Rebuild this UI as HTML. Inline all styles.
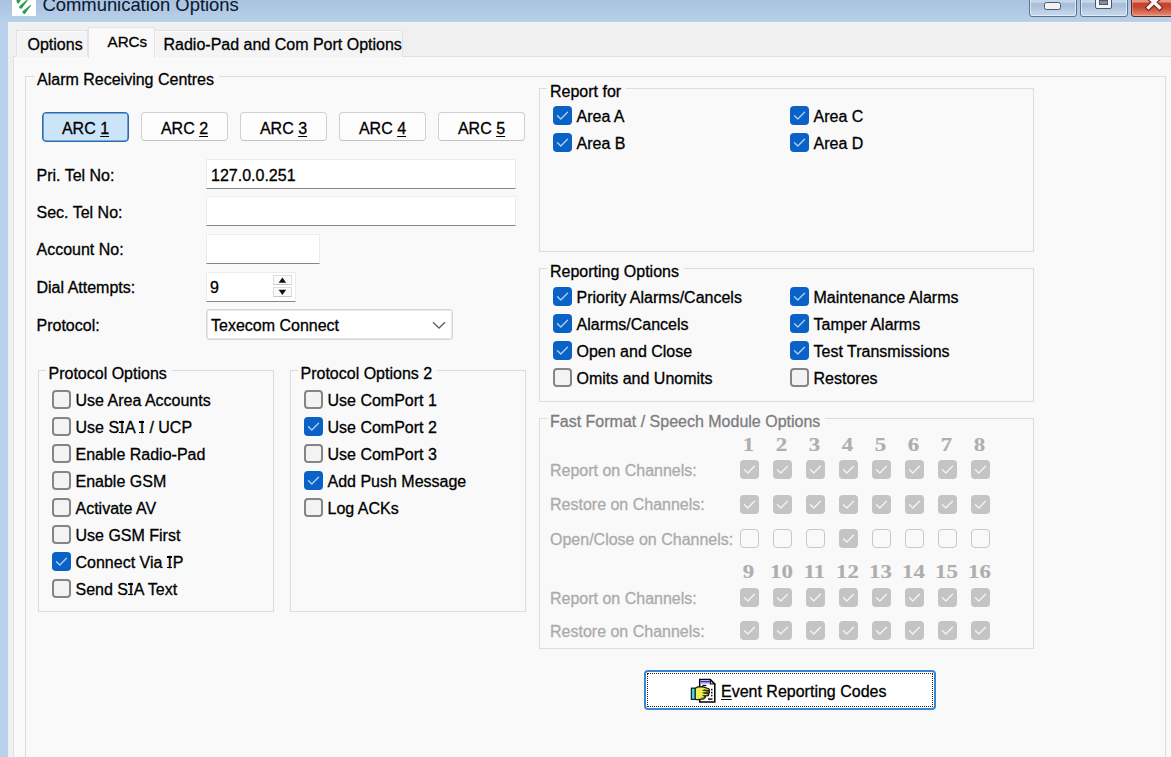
<!DOCTYPE html>
<html><head><meta charset="utf-8"><style>
html,body{margin:0;padding:0;}
body{width:1171px;height:757px;overflow:hidden;position:relative;background:#b9d1ea;font-family:"Liberation Sans", sans-serif;font-size:16px;}
.t{position:absolute;white-space:pre;line-height:18px;font-size:16px;-webkit-text-stroke:0.3px currentColor;}
.cb{position:absolute;box-sizing:border-box;width:19px;height:19px;border:2px solid #858585;border-radius:4px;background:#f3f3f3;}
.grp{position:absolute;border:1px solid #dcdcdc;box-sizing:border-box;}
.I{position:relative;margin:0 0.7px}
.I::before,.I::after{content:"";position:absolute;left:-0.6px;width:5.2px;height:1.5px;background:currentColor}
.I::before{top:2.6px}.I::after{top:12.9px}
.btn{position:absolute;box-sizing:border-box;border:1px solid #d0d0d0;border-radius:4px;background:#fdfdfd;}
.tb{position:absolute;box-sizing:border-box;background:#fff;border:1px solid #ececec;border-bottom:1px solid #858585;border-radius:1px 1px 0 0;}
</style></head><body>
<div style="position:absolute;left:0;top:0;width:1171px;height:22px;background:linear-gradient(#a9c2df,#b9d0ea)"></div>
<div style="position:absolute;left:12px;top:0;width:24px;height:16px;background:#fff"></div>
<svg style="position:absolute;left:12px;top:0" width="24" height="16" viewBox="0 0 24 16">
<path d="M4.3,-0.5 L9.2,-0.5 L6.8,3.4 Q5.6,4.0 5.0,2.8 Z" fill="#2e9b50"/>
<path d="M7.0,6.4 L15.5,-0.8 L16.1,-0.2 L9.6,8.8 Q7.2,9.2 7.0,6.4 Z" fill="#2e9b50"/>
<path d="M10.3,11.6 L18.6,4.7 L19.2,5.3 L12.9,14.0 Q10.5,14.5 10.3,11.6 Z" fill="#2e9b50"/>
</svg>
<div class="t" style="left:42.5px;top:-5px;font-size:18.4px;line-height:20px;color:#0b1a30;-webkit-text-stroke:0.1px currentColor">Communication Options</div>
<div style="position:absolute;left:1029px;top:-4px;width:48px;height:21px;box-sizing:border-box;border:1px solid #61748f;border-radius:0 0 3px 3px;background:linear-gradient(#c9daee 0%,#c3d5ea 28%,#a8bed9 33%,#abc1da 50%,#bcd0e7 75%,#c6d9ed 100%);box-shadow:inset 0 0 0 1px rgba(235,242,250,0.75)"></div>
<div style="position:absolute;left:1044px;top:2px;width:17px;height:8px;box-sizing:border-box;border:1.5px solid #4a5870;border-radius:2.5px;background:#f2f2f2"></div>
<div style="position:absolute;left:1080px;top:-4px;width:48px;height:21px;box-sizing:border-box;border:1px solid #61748f;border-radius:0 0 3px 3px;background:linear-gradient(#c9daee 0%,#c3d5ea 28%,#a8bed9 33%,#abc1da 50%,#bcd0e7 75%,#c6d9ed 100%);box-shadow:inset 0 0 0 1px rgba(235,242,250,0.75)"></div>
<div style="position:absolute;left:1095px;top:-4px;width:17px;height:13px;box-sizing:border-box;border:1px solid #4a5870;border-radius:2px;background:#f4f4f4"></div>
<div style="position:absolute;left:1099px;top:0px;width:9px;height:5px;box-sizing:border-box;border:1px solid #4a5870;background:#7f90a8"></div>
<div style="position:absolute;left:1131px;top:-4px;width:45px;height:21px;box-sizing:border-box;border:1px solid #5a2a24;border-radius:0 0 3px 3px;background:linear-gradient(#eaa292 0%,#e4907f 26%,#c8422a 33%,#c94a31 55%,#dc765e 85%,#e8907a 100%);box-shadow:inset 0 0 0 1px rgba(255,210,200,0.35)"></div>
<svg style="position:absolute;left:1139px;top:-8px" width="30" height="22"><path d="M9.5,5 L20.5,15.5 M20.5,5 L9.5,15.5" stroke="#7a2a1e" stroke-width="5.5" stroke-linecap="square"/><path d="M9.5,5 L20.5,15.5 M20.5,5 L9.5,15.5" stroke="#fbfbfb" stroke-width="3.2" stroke-linecap="square"/></svg>
<div style="position:absolute;left:0;top:22px;width:8px;height:735px;background:#b9d1ea"></div>
<div style="position:absolute;left:8px;top:22px;width:1163px;height:735px;background:#f0f0f0;border-left:1px solid #e8f0fa;border-top:1px solid #f4f6f9;box-sizing:border-box"></div>
<div style="position:absolute;left:13px;top:56px;width:1160px;height:710px;background:#f9f9f9;border:1px solid #e0e0e0;box-sizing:border-box"></div>
<div style="position:absolute;left:16px;top:30px;width:72px;height:27px;background:#f4f4f5;box-shadow:inset 1px 1px 0 #fafafa;border:1px solid #e3e3e3;border-bottom:none;box-sizing:border-box"></div>
<div style="position:absolute;left:154px;top:30px;width:249px;height:27px;background:#f4f4f5;box-shadow:inset 1px 1px 0 #fafafa;border:1px solid #e3e3e3;border-bottom:none;box-sizing:border-box"></div>
<div style="position:absolute;left:88px;top:27px;width:67px;height:31px;background:#f9f9f9;border:1px solid #e3e3e3;border-bottom:none;box-sizing:border-box"></div>
<div class="t" style="left:27.5px;top:36.00px;color:#000;font-size:16px;font-weight:normal;font-family:"Liberation Sans", sans-serif;">Options</div>
<div class="t" style="left:107.5px;top:33.20px;color:#000;font-size:15.2px;font-weight:normal;font-family:"Liberation Sans", sans-serif;">ARCs</div>
<div class="t" style="left:163.5px;top:36.00px;color:#000;font-size:16px;font-weight:normal;font-family:"Liberation Sans", sans-serif;">Radio-Pad and Com Port Options</div>
<div class="grp" style="left:25px;top:76px;width:1141px;height:724px"></div>
<div class="t" style="left:34px;top:70.70px;padding:0 5px 0 3px;background:#f9f9f9;color:#000">Alarm Receiving Centres</div>
<div class="btn" style="left:42px;top:112px;width:87px;height:29.5px;background:#cce4f7;border:1px solid #2a6bb0;box-shadow:inset 0 0 0 0.6px #2a6bb0"></div>
<div class="t" style="left:42px;top:113.5px;width:87px;text-align:center;line-height:29px">ARC <u style="text-underline-offset:2px">1</u></div>
<div class="btn" style="left:141px;top:112px;width:87px;height:29px;border-bottom-color:#c2c2c2"></div>
<div class="t" style="left:141px;top:113.5px;width:87px;text-align:center;line-height:29px">ARC <u style="text-underline-offset:2px">2</u></div>
<div class="btn" style="left:240px;top:112px;width:87px;height:29px;border-bottom-color:#c2c2c2"></div>
<div class="t" style="left:240px;top:113.5px;width:87px;text-align:center;line-height:29px">ARC <u style="text-underline-offset:2px">3</u></div>
<div class="btn" style="left:339px;top:112px;width:87px;height:29px;border-bottom-color:#c2c2c2"></div>
<div class="t" style="left:339px;top:113.5px;width:87px;text-align:center;line-height:29px">ARC <u style="text-underline-offset:2px">4</u></div>
<div class="btn" style="left:438px;top:112px;width:87px;height:29px;border-bottom-color:#c2c2c2"></div>
<div class="t" style="left:438px;top:113.5px;width:87px;text-align:center;line-height:29px">ARC <u style="text-underline-offset:2px">5</u></div>
<div class="t" style="left:36.5px;top:166.70px;color:#000;font-size:16px;font-weight:normal;font-family:"Liberation Sans", sans-serif;">Pri. Tel No:</div>
<div class="t" style="left:36.5px;top:204.30px;color:#000;font-size:16px;font-weight:normal;font-family:"Liberation Sans", sans-serif;">Sec. Tel No:</div>
<div class="t" style="left:36.5px;top:241.40px;color:#000;font-size:16px;font-weight:normal;font-family:"Liberation Sans", sans-serif;">Account No:</div>
<div class="t" style="left:36.5px;top:279.00px;color:#000;font-size:16px;font-weight:normal;font-family:"Liberation Sans", sans-serif;">Dial Attempts:</div>
<div class="t" style="left:36.5px;top:316.60px;color:#000;font-size:16px;font-weight:normal;font-family:"Liberation Sans", sans-serif;">Protocol:</div>
<div class="tb" style="left:206px;top:159px;width:310px;height:30px"></div>
<div class="t" style="left:211px;top:166.70px;color:#000;font-size:16px;font-weight:normal;font-family:"Liberation Sans", sans-serif;letter-spacing:0.4px">127.0.0.251</div>
<div class="tb" style="left:206px;top:196px;width:310px;height:30px"></div>
<div class="tb" style="left:206px;top:234px;width:114px;height:30px"></div>
<div class="tb" style="left:206px;top:272px;width:90px;height:30px"></div>
<div class="t" style="left:210px;top:279.00px;color:#000;font-size:16px;font-weight:normal;font-family:"Liberation Sans", sans-serif;">9</div>
<div style="position:absolute;left:273px;top:275px;width:19px;height:10px;box-sizing:border-box;border:1px solid #dedede;border-bottom-color:#c9c9c9;background:#fbfbfb"></div>
<div style="position:absolute;left:273px;top:287px;width:19px;height:10px;box-sizing:border-box;border:1px solid #dedede;border-bottom-color:#c9c9c9;background:#fbfbfb"></div>
<svg style="position:absolute;left:272px;top:274px" width="20" height="24"><path d="M6.6,8.8 L14.2,8.8 L10.4,3.6 Z" fill="#111"/><path d="M6.6,15.8 L14.2,15.8 L10.4,21 Z" fill="#111"/></svg>
<div style="position:absolute;left:206px;top:308.5px;width:247px;height:31px;box-sizing:border-box;border:1px solid #d6d6d6;box-shadow:inset 0 0 0 0.7px #e0e0e0;border-radius:3px;background:#fff"></div>
<div class="t" style="left:211px;top:316.60px;color:#000;font-size:16px;font-weight:normal;font-family:"Liberation Sans", sans-serif;">Texecom Connect</div>
<svg style="position:absolute;left:431px;top:318.5px" width="16" height="12"><polyline points="2,3.2 8,9 14,3.2" fill="none" stroke="#606060" stroke-width="1.3"/></svg>
<div class="grp" style="left:38px;top:370px;width:236px;height:242px"></div>
<div class="t" style="left:45.5px;top:365.10px;padding:0 5px 0 3px;background:#f9f9f9;color:#000">Protocol Options</div>
<div class="cb" style="left:52px;top:389.5px;"></div>
<div class="t" style="left:75.5px;top:391.70px;color:#000;font-size:16px;font-weight:normal;font-family:"Liberation Sans", sans-serif;">Use Area Accounts</div>
<div class="cb" style="left:52px;top:416.5px;"></div>
<div class="t" style="left:75.5px;top:418.70px;color:#000;font-size:16px;font-weight:normal;font-family:"Liberation Sans", sans-serif;">Use S<span class="I">I</span>A <span class="I">I</span> / UCP</div>
<div class="cb" style="left:52px;top:443.5px;"></div>
<div class="t" style="left:75.5px;top:445.70px;color:#000;font-size:16px;font-weight:normal;font-family:"Liberation Sans", sans-serif;">Enable Radio-Pad</div>
<div class="cb" style="left:52px;top:470.5px;"></div>
<div class="t" style="left:75.5px;top:472.70px;color:#000;font-size:16px;font-weight:normal;font-family:"Liberation Sans", sans-serif;">Enable GSM</div>
<div class="cb" style="left:52px;top:497.5px;"></div>
<div class="t" style="left:75.5px;top:499.70px;color:#000;font-size:16px;font-weight:normal;font-family:"Liberation Sans", sans-serif;">Activate AV</div>
<div class="cb" style="left:52px;top:524.5px;"></div>
<div class="t" style="left:75.5px;top:526.70px;color:#000;font-size:16px;font-weight:normal;font-family:"Liberation Sans", sans-serif;">Use GSM First</div>
<div class="cb" style="left:52px;top:551.5px;background:#0b62c6;border:none"><svg width="19" height="19" viewBox="0 0 19 19" style="position:absolute;left:0;top:0"><polyline points="4.5,9.8 7.8,13 14.5,6.2" fill="none" stroke="#a9d0f7" stroke-width="1.4" stroke-linecap="round" stroke-linejoin="round"/></svg></div>
<div class="t" style="left:75.5px;top:553.70px;color:#000;font-size:16px;font-weight:normal;font-family:"Liberation Sans", sans-serif;">Connect Via <span class="I">I</span>P</div>
<div class="cb" style="left:52px;top:578.5px;"></div>
<div class="t" style="left:75.5px;top:580.70px;color:#000;font-size:16px;font-weight:normal;font-family:"Liberation Sans", sans-serif;">Send S<span class="I">I</span>A Text</div>
<div class="grp" style="left:290px;top:370px;width:236px;height:242px"></div>
<div class="t" style="left:297.5px;top:365.10px;padding:0 5px 0 3px;background:#f9f9f9;color:#000">Protocol Options 2</div>
<div class="cb" style="left:304px;top:389.5px;"></div>
<div class="t" style="left:327.5px;top:391.70px;color:#000;font-size:16px;font-weight:normal;font-family:"Liberation Sans", sans-serif;">Use ComPort 1</div>
<div class="cb" style="left:304px;top:416.5px;background:#0b62c6;border:none"><svg width="19" height="19" viewBox="0 0 19 19" style="position:absolute;left:0;top:0"><polyline points="4.5,9.8 7.8,13 14.5,6.2" fill="none" stroke="#a9d0f7" stroke-width="1.4" stroke-linecap="round" stroke-linejoin="round"/></svg></div>
<div class="t" style="left:327.5px;top:418.70px;color:#000;font-size:16px;font-weight:normal;font-family:"Liberation Sans", sans-serif;">Use ComPort 2</div>
<div class="cb" style="left:304px;top:443.5px;"></div>
<div class="t" style="left:327.5px;top:445.70px;color:#000;font-size:16px;font-weight:normal;font-family:"Liberation Sans", sans-serif;">Use ComPort 3</div>
<div class="cb" style="left:304px;top:470.5px;background:#0b62c6;border:none"><svg width="19" height="19" viewBox="0 0 19 19" style="position:absolute;left:0;top:0"><polyline points="4.5,9.8 7.8,13 14.5,6.2" fill="none" stroke="#a9d0f7" stroke-width="1.4" stroke-linecap="round" stroke-linejoin="round"/></svg></div>
<div class="t" style="left:327.5px;top:472.70px;color:#000;font-size:16px;font-weight:normal;font-family:"Liberation Sans", sans-serif;">Add Push Message</div>
<div class="cb" style="left:304px;top:497.5px;"></div>
<div class="t" style="left:327.5px;top:499.70px;color:#000;font-size:16px;font-weight:normal;font-family:"Liberation Sans", sans-serif;">Log ACKs</div>
<div class="grp" style="left:539px;top:88px;width:495px;height:164px"></div>
<div class="t" style="left:547px;top:83.20px;padding:0 5px 0 3px;background:#f9f9f9;color:#000">Report for</div>
<div class="cb" style="left:553px;top:106px;background:#0b62c6;border:none"><svg width="19" height="19" viewBox="0 0 19 19" style="position:absolute;left:0;top:0"><polyline points="4.5,9.8 7.8,13 14.5,6.2" fill="none" stroke="#a9d0f7" stroke-width="1.4" stroke-linecap="round" stroke-linejoin="round"/></svg></div>
<div class="t" style="left:576.5px;top:108.20px;color:#000;font-size:16px;font-weight:normal;font-family:"Liberation Sans", sans-serif;">Area A</div>
<div class="cb" style="left:553px;top:133.2px;background:#0b62c6;border:none"><svg width="19" height="19" viewBox="0 0 19 19" style="position:absolute;left:0;top:0"><polyline points="4.5,9.8 7.8,13 14.5,6.2" fill="none" stroke="#a9d0f7" stroke-width="1.4" stroke-linecap="round" stroke-linejoin="round"/></svg></div>
<div class="t" style="left:576.5px;top:135.40px;color:#000;font-size:16px;font-weight:normal;font-family:"Liberation Sans", sans-serif;">Area B</div>
<div class="cb" style="left:790px;top:106px;background:#0b62c6;border:none"><svg width="19" height="19" viewBox="0 0 19 19" style="position:absolute;left:0;top:0"><polyline points="4.5,9.8 7.8,13 14.5,6.2" fill="none" stroke="#a9d0f7" stroke-width="1.4" stroke-linecap="round" stroke-linejoin="round"/></svg></div>
<div class="t" style="left:813.5px;top:108.20px;color:#000;font-size:16px;font-weight:normal;font-family:"Liberation Sans", sans-serif;">Area C</div>
<div class="cb" style="left:790px;top:133.2px;background:#0b62c6;border:none"><svg width="19" height="19" viewBox="0 0 19 19" style="position:absolute;left:0;top:0"><polyline points="4.5,9.8 7.8,13 14.5,6.2" fill="none" stroke="#a9d0f7" stroke-width="1.4" stroke-linecap="round" stroke-linejoin="round"/></svg></div>
<div class="t" style="left:813.5px;top:135.40px;color:#000;font-size:16px;font-weight:normal;font-family:"Liberation Sans", sans-serif;">Area D</div>
<div class="grp" style="left:539px;top:268px;width:495px;height:134px"></div>
<div class="t" style="left:547px;top:263.20px;padding:0 5px 0 3px;background:#f9f9f9;color:#000">Reporting Options</div>
<div class="cb" style="left:553px;top:287px;background:#0b62c6;border:none"><svg width="19" height="19" viewBox="0 0 19 19" style="position:absolute;left:0;top:0"><polyline points="4.5,9.8 7.8,13 14.5,6.2" fill="none" stroke="#a9d0f7" stroke-width="1.4" stroke-linecap="round" stroke-linejoin="round"/></svg></div>
<div class="t" style="left:576.5px;top:289.20px;color:#000;font-size:16px;font-weight:normal;font-family:"Liberation Sans", sans-serif;">Priority Alarms/Cancels</div>
<div class="cb" style="left:790px;top:287px;background:#0b62c6;border:none"><svg width="19" height="19" viewBox="0 0 19 19" style="position:absolute;left:0;top:0"><polyline points="4.5,9.8 7.8,13 14.5,6.2" fill="none" stroke="#a9d0f7" stroke-width="1.4" stroke-linecap="round" stroke-linejoin="round"/></svg></div>
<div class="t" style="left:813.5px;top:289.20px;color:#000;font-size:16px;font-weight:normal;font-family:"Liberation Sans", sans-serif;">Maintenance Alarms</div>
<div class="cb" style="left:553px;top:314px;background:#0b62c6;border:none"><svg width="19" height="19" viewBox="0 0 19 19" style="position:absolute;left:0;top:0"><polyline points="4.5,9.8 7.8,13 14.5,6.2" fill="none" stroke="#a9d0f7" stroke-width="1.4" stroke-linecap="round" stroke-linejoin="round"/></svg></div>
<div class="t" style="left:576.5px;top:316.20px;color:#000;font-size:16px;font-weight:normal;font-family:"Liberation Sans", sans-serif;">Alarms/Cancels</div>
<div class="cb" style="left:790px;top:314px;background:#0b62c6;border:none"><svg width="19" height="19" viewBox="0 0 19 19" style="position:absolute;left:0;top:0"><polyline points="4.5,9.8 7.8,13 14.5,6.2" fill="none" stroke="#a9d0f7" stroke-width="1.4" stroke-linecap="round" stroke-linejoin="round"/></svg></div>
<div class="t" style="left:813.5px;top:316.20px;color:#000;font-size:16px;font-weight:normal;font-family:"Liberation Sans", sans-serif;">Tamper Alarms</div>
<div class="cb" style="left:553px;top:341px;background:#0b62c6;border:none"><svg width="19" height="19" viewBox="0 0 19 19" style="position:absolute;left:0;top:0"><polyline points="4.5,9.8 7.8,13 14.5,6.2" fill="none" stroke="#a9d0f7" stroke-width="1.4" stroke-linecap="round" stroke-linejoin="round"/></svg></div>
<div class="t" style="left:576.5px;top:343.20px;color:#000;font-size:16px;font-weight:normal;font-family:"Liberation Sans", sans-serif;">Open and Close</div>
<div class="cb" style="left:790px;top:341px;background:#0b62c6;border:none"><svg width="19" height="19" viewBox="0 0 19 19" style="position:absolute;left:0;top:0"><polyline points="4.5,9.8 7.8,13 14.5,6.2" fill="none" stroke="#a9d0f7" stroke-width="1.4" stroke-linecap="round" stroke-linejoin="round"/></svg></div>
<div class="t" style="left:813.5px;top:343.20px;color:#000;font-size:16px;font-weight:normal;font-family:"Liberation Sans", sans-serif;">Test Transmissions</div>
<div class="cb" style="left:553px;top:368px;"></div>
<div class="t" style="left:576.5px;top:370.20px;color:#000;font-size:16px;font-weight:normal;font-family:"Liberation Sans", sans-serif;">Omits and Unomits</div>
<div class="cb" style="left:790px;top:368px;"></div>
<div class="t" style="left:813.5px;top:370.20px;color:#000;font-size:16px;font-weight:normal;font-family:"Liberation Sans", sans-serif;">Restores</div>
<div class="grp" style="left:539px;top:418px;width:495px;height:231px"></div>
<div class="t" style="left:547px;top:413.10px;padding:0 5px 0 3px;background:#f9f9f9;color:#7d7d80">Fast Format / Speech Module Options</div>
<div class="t" style="left:550px;top:461.90px;color:#ababab;font-size:16px;font-weight:normal;font-family:"Liberation Sans", sans-serif;">Report on Channels:</div>
<div class="t" style="left:550px;top:496.00px;color:#ababab;font-size:16px;font-weight:normal;font-family:"Liberation Sans", sans-serif;">Restore on Channels:</div>
<div class="t" style="left:550px;top:530.70px;color:#ababab;font-size:16px;font-weight:normal;font-family:"Liberation Sans", sans-serif;">Open/Close on Channels:</div>
<div class="t" style="left:550px;top:589.50px;color:#ababab;font-size:16px;font-weight:normal;font-family:"Liberation Sans", sans-serif;">Report on Channels:</div>
<div class="t" style="left:550px;top:622.50px;color:#ababab;font-size:16px;font-weight:normal;font-family:"Liberation Sans", sans-serif;">Restore on Channels:</div>
<div class="t" style="left:724px;top:436.20px;width:49px;text-align:center;color:#aeaeae;font-family:'Liberation Serif',serif;font-weight:bold;font-size:18px;transform:scaleX(1.27);-webkit-text-stroke:0.15px currentColor">1</div>
<div class="t" style="left:724px;top:563.40px;width:49px;text-align:center;color:#aeaeae;font-family:'Liberation Serif',serif;font-weight:bold;font-size:18px;transform:scaleX(1.27);-webkit-text-stroke:0.15px currentColor">9</div>
<div class="cb" style="left:740px;top:460px;background:#c4c4c4;border:none"><svg width="19" height="19" viewBox="0 0 19 19" style="position:absolute;left:0;top:0"><polyline points="4.5,9.8 7.8,13 14.5,6.2" fill="none" stroke="#f4f4f4" stroke-width="1.4" stroke-linecap="round" stroke-linejoin="round"/></svg></div>
<div class="cb" style="left:740px;top:494.6px;background:#c4c4c4;border:none"><svg width="19" height="19" viewBox="0 0 19 19" style="position:absolute;left:0;top:0"><polyline points="4.5,9.8 7.8,13 14.5,6.2" fill="none" stroke="#f4f4f4" stroke-width="1.4" stroke-linecap="round" stroke-linejoin="round"/></svg></div>
<div class="cb" style="left:740px;top:529.1px;background:transparent;border:1px solid #c8c8c8"></div>
<div class="cb" style="left:740px;top:587.7px;background:#c4c4c4;border:none"><svg width="19" height="19" viewBox="0 0 19 19" style="position:absolute;left:0;top:0"><polyline points="4.5,9.8 7.8,13 14.5,6.2" fill="none" stroke="#f4f4f4" stroke-width="1.4" stroke-linecap="round" stroke-linejoin="round"/></svg></div>
<div class="cb" style="left:740px;top:620.7px;background:#c4c4c4;border:none"><svg width="19" height="19" viewBox="0 0 19 19" style="position:absolute;left:0;top:0"><polyline points="4.5,9.8 7.8,13 14.5,6.2" fill="none" stroke="#f4f4f4" stroke-width="1.4" stroke-linecap="round" stroke-linejoin="round"/></svg></div>
<div class="t" style="left:757px;top:436.20px;width:49px;text-align:center;color:#aeaeae;font-family:'Liberation Serif',serif;font-weight:bold;font-size:18px;transform:scaleX(1.27);-webkit-text-stroke:0.15px currentColor">2</div>
<div class="t" style="left:757px;top:563.40px;width:49px;text-align:center;color:#aeaeae;font-family:'Liberation Serif',serif;font-weight:bold;font-size:18px;transform:scaleX(1.27);-webkit-text-stroke:0.15px currentColor">10</div>
<div class="cb" style="left:773px;top:460px;background:#c4c4c4;border:none"><svg width="19" height="19" viewBox="0 0 19 19" style="position:absolute;left:0;top:0"><polyline points="4.5,9.8 7.8,13 14.5,6.2" fill="none" stroke="#f4f4f4" stroke-width="1.4" stroke-linecap="round" stroke-linejoin="round"/></svg></div>
<div class="cb" style="left:773px;top:494.6px;background:#c4c4c4;border:none"><svg width="19" height="19" viewBox="0 0 19 19" style="position:absolute;left:0;top:0"><polyline points="4.5,9.8 7.8,13 14.5,6.2" fill="none" stroke="#f4f4f4" stroke-width="1.4" stroke-linecap="round" stroke-linejoin="round"/></svg></div>
<div class="cb" style="left:773px;top:529.1px;background:transparent;border:1px solid #c8c8c8"></div>
<div class="cb" style="left:773px;top:587.7px;background:#c4c4c4;border:none"><svg width="19" height="19" viewBox="0 0 19 19" style="position:absolute;left:0;top:0"><polyline points="4.5,9.8 7.8,13 14.5,6.2" fill="none" stroke="#f4f4f4" stroke-width="1.4" stroke-linecap="round" stroke-linejoin="round"/></svg></div>
<div class="cb" style="left:773px;top:620.7px;background:#c4c4c4;border:none"><svg width="19" height="19" viewBox="0 0 19 19" style="position:absolute;left:0;top:0"><polyline points="4.5,9.8 7.8,13 14.5,6.2" fill="none" stroke="#f4f4f4" stroke-width="1.4" stroke-linecap="round" stroke-linejoin="round"/></svg></div>
<div class="t" style="left:790px;top:436.20px;width:49px;text-align:center;color:#aeaeae;font-family:'Liberation Serif',serif;font-weight:bold;font-size:18px;transform:scaleX(1.27);-webkit-text-stroke:0.15px currentColor">3</div>
<div class="t" style="left:790px;top:563.40px;width:49px;text-align:center;color:#aeaeae;font-family:'Liberation Serif',serif;font-weight:bold;font-size:18px;transform:scaleX(1.27);-webkit-text-stroke:0.15px currentColor">11</div>
<div class="cb" style="left:806px;top:460px;background:#c4c4c4;border:none"><svg width="19" height="19" viewBox="0 0 19 19" style="position:absolute;left:0;top:0"><polyline points="4.5,9.8 7.8,13 14.5,6.2" fill="none" stroke="#f4f4f4" stroke-width="1.4" stroke-linecap="round" stroke-linejoin="round"/></svg></div>
<div class="cb" style="left:806px;top:494.6px;background:#c4c4c4;border:none"><svg width="19" height="19" viewBox="0 0 19 19" style="position:absolute;left:0;top:0"><polyline points="4.5,9.8 7.8,13 14.5,6.2" fill="none" stroke="#f4f4f4" stroke-width="1.4" stroke-linecap="round" stroke-linejoin="round"/></svg></div>
<div class="cb" style="left:806px;top:529.1px;background:transparent;border:1px solid #c8c8c8"></div>
<div class="cb" style="left:806px;top:587.7px;background:#c4c4c4;border:none"><svg width="19" height="19" viewBox="0 0 19 19" style="position:absolute;left:0;top:0"><polyline points="4.5,9.8 7.8,13 14.5,6.2" fill="none" stroke="#f4f4f4" stroke-width="1.4" stroke-linecap="round" stroke-linejoin="round"/></svg></div>
<div class="cb" style="left:806px;top:620.7px;background:#c4c4c4;border:none"><svg width="19" height="19" viewBox="0 0 19 19" style="position:absolute;left:0;top:0"><polyline points="4.5,9.8 7.8,13 14.5,6.2" fill="none" stroke="#f4f4f4" stroke-width="1.4" stroke-linecap="round" stroke-linejoin="round"/></svg></div>
<div class="t" style="left:823px;top:436.20px;width:49px;text-align:center;color:#aeaeae;font-family:'Liberation Serif',serif;font-weight:bold;font-size:18px;transform:scaleX(1.27);-webkit-text-stroke:0.15px currentColor">4</div>
<div class="t" style="left:823px;top:563.40px;width:49px;text-align:center;color:#aeaeae;font-family:'Liberation Serif',serif;font-weight:bold;font-size:18px;transform:scaleX(1.27);-webkit-text-stroke:0.15px currentColor">12</div>
<div class="cb" style="left:839px;top:460px;background:#c4c4c4;border:none"><svg width="19" height="19" viewBox="0 0 19 19" style="position:absolute;left:0;top:0"><polyline points="4.5,9.8 7.8,13 14.5,6.2" fill="none" stroke="#f4f4f4" stroke-width="1.4" stroke-linecap="round" stroke-linejoin="round"/></svg></div>
<div class="cb" style="left:839px;top:494.6px;background:#c4c4c4;border:none"><svg width="19" height="19" viewBox="0 0 19 19" style="position:absolute;left:0;top:0"><polyline points="4.5,9.8 7.8,13 14.5,6.2" fill="none" stroke="#f4f4f4" stroke-width="1.4" stroke-linecap="round" stroke-linejoin="round"/></svg></div>
<div class="cb" style="left:839px;top:529.1px;background:#c4c4c4;border:none"><svg width="19" height="19" viewBox="0 0 19 19" style="position:absolute;left:0;top:0"><polyline points="4.5,9.8 7.8,13 14.5,6.2" fill="none" stroke="#f4f4f4" stroke-width="1.4" stroke-linecap="round" stroke-linejoin="round"/></svg></div>
<div class="cb" style="left:839px;top:587.7px;background:#c4c4c4;border:none"><svg width="19" height="19" viewBox="0 0 19 19" style="position:absolute;left:0;top:0"><polyline points="4.5,9.8 7.8,13 14.5,6.2" fill="none" stroke="#f4f4f4" stroke-width="1.4" stroke-linecap="round" stroke-linejoin="round"/></svg></div>
<div class="cb" style="left:839px;top:620.7px;background:#c4c4c4;border:none"><svg width="19" height="19" viewBox="0 0 19 19" style="position:absolute;left:0;top:0"><polyline points="4.5,9.8 7.8,13 14.5,6.2" fill="none" stroke="#f4f4f4" stroke-width="1.4" stroke-linecap="round" stroke-linejoin="round"/></svg></div>
<div class="t" style="left:856px;top:436.20px;width:49px;text-align:center;color:#aeaeae;font-family:'Liberation Serif',serif;font-weight:bold;font-size:18px;transform:scaleX(1.27);-webkit-text-stroke:0.15px currentColor">5</div>
<div class="t" style="left:856px;top:563.40px;width:49px;text-align:center;color:#aeaeae;font-family:'Liberation Serif',serif;font-weight:bold;font-size:18px;transform:scaleX(1.27);-webkit-text-stroke:0.15px currentColor">13</div>
<div class="cb" style="left:872px;top:460px;background:#c4c4c4;border:none"><svg width="19" height="19" viewBox="0 0 19 19" style="position:absolute;left:0;top:0"><polyline points="4.5,9.8 7.8,13 14.5,6.2" fill="none" stroke="#f4f4f4" stroke-width="1.4" stroke-linecap="round" stroke-linejoin="round"/></svg></div>
<div class="cb" style="left:872px;top:494.6px;background:#c4c4c4;border:none"><svg width="19" height="19" viewBox="0 0 19 19" style="position:absolute;left:0;top:0"><polyline points="4.5,9.8 7.8,13 14.5,6.2" fill="none" stroke="#f4f4f4" stroke-width="1.4" stroke-linecap="round" stroke-linejoin="round"/></svg></div>
<div class="cb" style="left:872px;top:529.1px;background:transparent;border:1px solid #c8c8c8"></div>
<div class="cb" style="left:872px;top:587.7px;background:#c4c4c4;border:none"><svg width="19" height="19" viewBox="0 0 19 19" style="position:absolute;left:0;top:0"><polyline points="4.5,9.8 7.8,13 14.5,6.2" fill="none" stroke="#f4f4f4" stroke-width="1.4" stroke-linecap="round" stroke-linejoin="round"/></svg></div>
<div class="cb" style="left:872px;top:620.7px;background:#c4c4c4;border:none"><svg width="19" height="19" viewBox="0 0 19 19" style="position:absolute;left:0;top:0"><polyline points="4.5,9.8 7.8,13 14.5,6.2" fill="none" stroke="#f4f4f4" stroke-width="1.4" stroke-linecap="round" stroke-linejoin="round"/></svg></div>
<div class="t" style="left:889px;top:436.20px;width:49px;text-align:center;color:#aeaeae;font-family:'Liberation Serif',serif;font-weight:bold;font-size:18px;transform:scaleX(1.27);-webkit-text-stroke:0.15px currentColor">6</div>
<div class="t" style="left:889px;top:563.40px;width:49px;text-align:center;color:#aeaeae;font-family:'Liberation Serif',serif;font-weight:bold;font-size:18px;transform:scaleX(1.27);-webkit-text-stroke:0.15px currentColor">14</div>
<div class="cb" style="left:905px;top:460px;background:#c4c4c4;border:none"><svg width="19" height="19" viewBox="0 0 19 19" style="position:absolute;left:0;top:0"><polyline points="4.5,9.8 7.8,13 14.5,6.2" fill="none" stroke="#f4f4f4" stroke-width="1.4" stroke-linecap="round" stroke-linejoin="round"/></svg></div>
<div class="cb" style="left:905px;top:494.6px;background:#c4c4c4;border:none"><svg width="19" height="19" viewBox="0 0 19 19" style="position:absolute;left:0;top:0"><polyline points="4.5,9.8 7.8,13 14.5,6.2" fill="none" stroke="#f4f4f4" stroke-width="1.4" stroke-linecap="round" stroke-linejoin="round"/></svg></div>
<div class="cb" style="left:905px;top:529.1px;background:transparent;border:1px solid #c8c8c8"></div>
<div class="cb" style="left:905px;top:587.7px;background:#c4c4c4;border:none"><svg width="19" height="19" viewBox="0 0 19 19" style="position:absolute;left:0;top:0"><polyline points="4.5,9.8 7.8,13 14.5,6.2" fill="none" stroke="#f4f4f4" stroke-width="1.4" stroke-linecap="round" stroke-linejoin="round"/></svg></div>
<div class="cb" style="left:905px;top:620.7px;background:#c4c4c4;border:none"><svg width="19" height="19" viewBox="0 0 19 19" style="position:absolute;left:0;top:0"><polyline points="4.5,9.8 7.8,13 14.5,6.2" fill="none" stroke="#f4f4f4" stroke-width="1.4" stroke-linecap="round" stroke-linejoin="round"/></svg></div>
<div class="t" style="left:922px;top:436.20px;width:49px;text-align:center;color:#aeaeae;font-family:'Liberation Serif',serif;font-weight:bold;font-size:18px;transform:scaleX(1.27);-webkit-text-stroke:0.15px currentColor">7</div>
<div class="t" style="left:922px;top:563.40px;width:49px;text-align:center;color:#aeaeae;font-family:'Liberation Serif',serif;font-weight:bold;font-size:18px;transform:scaleX(1.27);-webkit-text-stroke:0.15px currentColor">15</div>
<div class="cb" style="left:938px;top:460px;background:#c4c4c4;border:none"><svg width="19" height="19" viewBox="0 0 19 19" style="position:absolute;left:0;top:0"><polyline points="4.5,9.8 7.8,13 14.5,6.2" fill="none" stroke="#f4f4f4" stroke-width="1.4" stroke-linecap="round" stroke-linejoin="round"/></svg></div>
<div class="cb" style="left:938px;top:494.6px;background:#c4c4c4;border:none"><svg width="19" height="19" viewBox="0 0 19 19" style="position:absolute;left:0;top:0"><polyline points="4.5,9.8 7.8,13 14.5,6.2" fill="none" stroke="#f4f4f4" stroke-width="1.4" stroke-linecap="round" stroke-linejoin="round"/></svg></div>
<div class="cb" style="left:938px;top:529.1px;background:transparent;border:1px solid #c8c8c8"></div>
<div class="cb" style="left:938px;top:587.7px;background:#c4c4c4;border:none"><svg width="19" height="19" viewBox="0 0 19 19" style="position:absolute;left:0;top:0"><polyline points="4.5,9.8 7.8,13 14.5,6.2" fill="none" stroke="#f4f4f4" stroke-width="1.4" stroke-linecap="round" stroke-linejoin="round"/></svg></div>
<div class="cb" style="left:938px;top:620.7px;background:#c4c4c4;border:none"><svg width="19" height="19" viewBox="0 0 19 19" style="position:absolute;left:0;top:0"><polyline points="4.5,9.8 7.8,13 14.5,6.2" fill="none" stroke="#f4f4f4" stroke-width="1.4" stroke-linecap="round" stroke-linejoin="round"/></svg></div>
<div class="t" style="left:955px;top:436.20px;width:49px;text-align:center;color:#aeaeae;font-family:'Liberation Serif',serif;font-weight:bold;font-size:18px;transform:scaleX(1.27);-webkit-text-stroke:0.15px currentColor">8</div>
<div class="t" style="left:955px;top:563.40px;width:49px;text-align:center;color:#aeaeae;font-family:'Liberation Serif',serif;font-weight:bold;font-size:18px;transform:scaleX(1.27);-webkit-text-stroke:0.15px currentColor">16</div>
<div class="cb" style="left:971px;top:460px;background:#c4c4c4;border:none"><svg width="19" height="19" viewBox="0 0 19 19" style="position:absolute;left:0;top:0"><polyline points="4.5,9.8 7.8,13 14.5,6.2" fill="none" stroke="#f4f4f4" stroke-width="1.4" stroke-linecap="round" stroke-linejoin="round"/></svg></div>
<div class="cb" style="left:971px;top:494.6px;background:#c4c4c4;border:none"><svg width="19" height="19" viewBox="0 0 19 19" style="position:absolute;left:0;top:0"><polyline points="4.5,9.8 7.8,13 14.5,6.2" fill="none" stroke="#f4f4f4" stroke-width="1.4" stroke-linecap="round" stroke-linejoin="round"/></svg></div>
<div class="cb" style="left:971px;top:529.1px;background:transparent;border:1px solid #c8c8c8"></div>
<div class="cb" style="left:971px;top:587.7px;background:#c4c4c4;border:none"><svg width="19" height="19" viewBox="0 0 19 19" style="position:absolute;left:0;top:0"><polyline points="4.5,9.8 7.8,13 14.5,6.2" fill="none" stroke="#f4f4f4" stroke-width="1.4" stroke-linecap="round" stroke-linejoin="round"/></svg></div>
<div class="cb" style="left:971px;top:620.7px;background:#c4c4c4;border:none"><svg width="19" height="19" viewBox="0 0 19 19" style="position:absolute;left:0;top:0"><polyline points="4.5,9.8 7.8,13 14.5,6.2" fill="none" stroke="#f4f4f4" stroke-width="1.4" stroke-linecap="round" stroke-linejoin="round"/></svg></div>
<div style="position:absolute;left:644px;top:670px;width:292px;height:40px;box-sizing:border-box;border:2px solid #3a86d4;border-radius:4px;background:#fff"></div>
<div style="position:absolute;left:647px;top:673px;width:286px;height:34px;box-sizing:border-box;border:1px dotted #222"></div>
<svg style="position:absolute;left:690px;top:678px" width="28" height="26" viewBox="0 0 28 26">
<path d="M9.7,1.6 L20.3,1.6 L24.8,6 L24.8,23.9 L9.7,23.9 Z" fill="#fff" stroke="#000" stroke-width="1.5"/>
<path d="M20.3,1.8 L20.3,6 L24.6,6 Z" fill="#d8d8d8" stroke="#000" stroke-width="1.1"/>
<rect x="10.6" y="3" width="9.2" height="1.6" fill="#2a2ad0"/>
<rect x="10.6" y="4.6" width="9.2" height="1" fill="#a0a0ff"/>
<rect x="12.3" y="6.8" width="4" height="1.4" fill="#111"/>
<rect x="21" y="10.8" width="1.5" height="1.6" fill="#111"/><rect x="21" y="13.8" width="1.5" height="1.6" fill="#111"/><rect x="21" y="16.8" width="1.5" height="1.6" fill="#111"/>
<rect x="18" y="20.3" width="4.5" height="1.5" fill="#111"/>
<path d="M5,10.6 L8,8.8 L12,8.6 L18.8,10.8 L19.6,11.8 L18.8,12.6 L14,12.4 L19.4,13.4 L19.4,14.8 L14,15 L18.8,16.1 L18.3,17.7 L14,17.8 L15.6,19 L13.8,20.9 L8,21.7 L5,21.3 Z" fill="#f0ee50" stroke="#111" stroke-width="1.2" stroke-linejoin="round"/>
<path d="M12.5,12.3 L18.8,12.3 M12.5,14.9 L19,14.9 M12.5,17.6 L18,17.6 M11.5,20 L14.5,20" stroke="#3a3a10" stroke-width="1"/>
<rect x="1.4" y="10.2" width="3.7" height="11.2" fill="#50d8e8" stroke="#0a2a2a" stroke-width="1.3"/>
</svg>
<div class="t" style="left:721px;top:683.00px;color:#000;font-size:16px;font-weight:normal;font-family:"Liberation Sans", sans-serif;"><u style="text-underline-offset:2px">E</u>vent Reporting Codes</div>
</body></html>
